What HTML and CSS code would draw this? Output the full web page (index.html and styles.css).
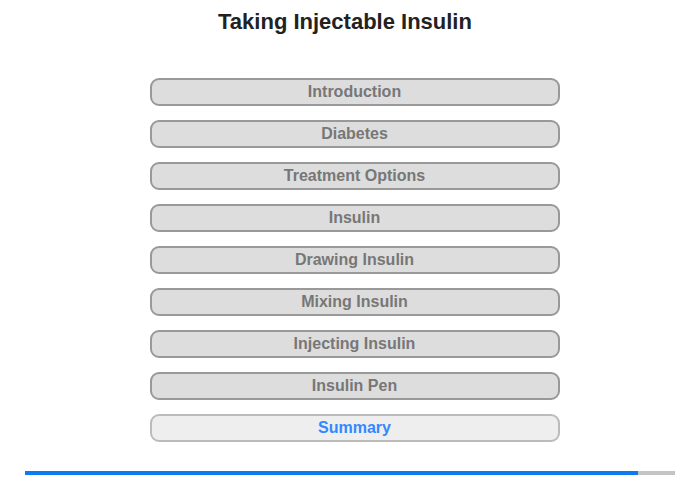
FILE: index.html
```html
<!DOCTYPE html>
<html lang="en">
<head>
  <meta charset="UTF-8" />
  <title>Taking Injectable Insulin</title>
  <link rel="stylesheet" href="styles.css">
</head>
<body>

  <h1 class="title">Taking Injectable Insulin</h1>

  <div class="menu">
    <button class="item">Introduction</button>
    <button class="item">Diabetes</button>
    <button class="item">Treatment Options</button>
    <button class="item">Insulin</button>
    <button class="item">Drawing Insulin</button>
    <button class="item">Mixing Insulin</button>
    <button class="item">Injecting Insulin</button>
    <button class="item">Insulin Pen</button>
    <button class="item current">Summary</button>
  </div>

  <div class="progress">
    <div class="fill" style="width: 94.3%"></div>
  </div>

</body>
</html>
```

FILE: styles.css
```css
body {
  margin: 0;
  padding: 0;
  font-family: "Liberation Sans", Arial, sans-serif;
  background: #fff;
  width: 700px;
  height: 480px;
  overflow: hidden;
}

.title {
  margin: 0;
  padding: 9px 10px 0 0;
  height: 78px;
  box-sizing: border-box;
  font-size: 22px;
  line-height: 26px;
  text-align: center;
  color: #222;
}

.menu {
  display: flex;
  flex-direction: column;
  align-items: center;
  gap: 14px;
  padding-left: 9px;
}

.item {
  width: 410px;
  height: 28px;
  margin: 0;
  padding: 0;
  border: 2px solid #999;
  border-radius: 9px;
  background: #ddd;
  color: #777;
  font-family: "Liberation Sans", Arial, sans-serif;
  font-size: 16px;
  font-weight: bold;
  cursor: pointer;
}

.item.current {
  border-color: #bbb;
  background: #eee;
  color: #3388ff;
}

.progress {
  margin: 29px 25px 0;
  height: 4px;
  background: #c4c4c4;
}

.fill {
  height: 100%;
  background: #0a7cf0;
}
```
